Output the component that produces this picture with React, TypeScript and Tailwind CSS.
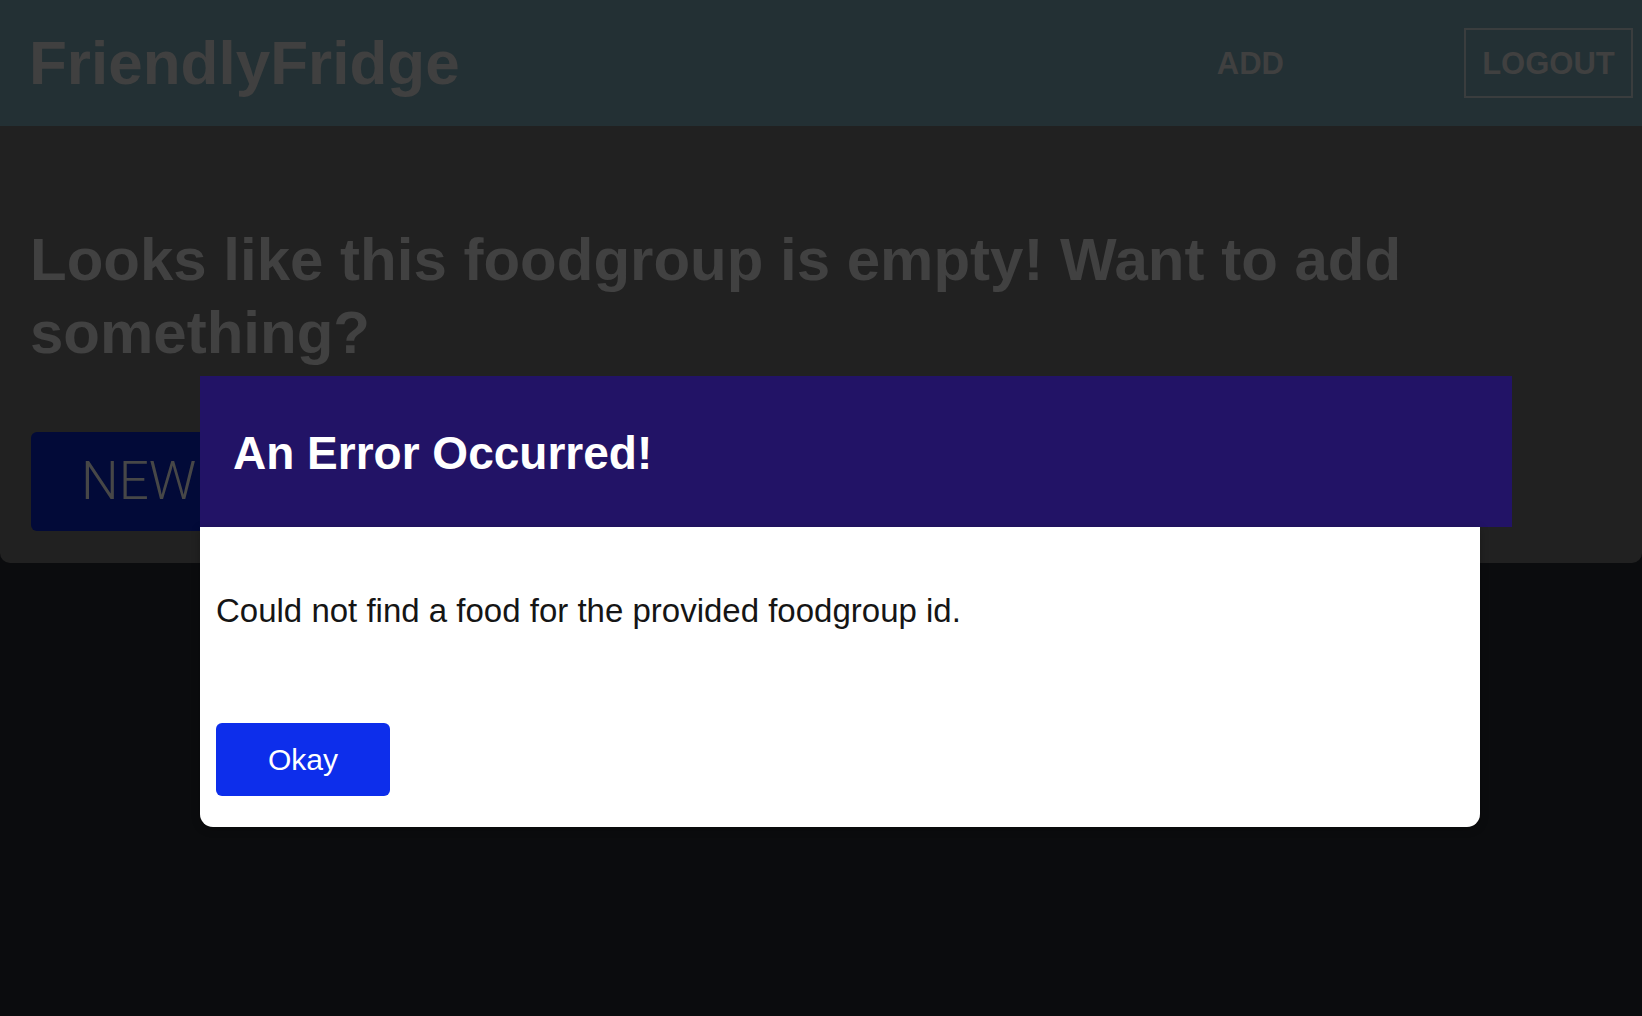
import React from "react";

export default function App() {
  return (
    <div
      className="relative min-h-screen w-full bg-[#0b0c0e] overflow-hidden"
      style={{ fontFamily: '"Liberation Sans", Arial, sans-serif' }}
    >
      <header className="h-[126px] bg-[#233034] flex items-center justify-between pl-[29px] pr-[9px]">
        <h1 className="text-[62px] font-bold text-[#404040] leading-none">FriendlyFridge</h1>
        <nav className="flex items-center gap-[180px]">
          <span className="text-[31px] font-bold text-[#404040] leading-none">ADD</span>
          <span className="h-[70px] w-[169px] border-2 border-[#3a3d3e] flex items-center justify-center text-[31px] font-bold text-[#404040] leading-none">
            LOGOUT
          </span>
        </nav>
      </header>

      <main className="bg-[#212121] rounded-b-[10px] pl-[30px] pr-[31px] pt-[97px] pb-[32px]">
        <h2 className="text-[60px] leading-[73px] font-bold text-[#414141]">
          Looks like this foodgroup is empty! Want to add something?
        </h2>
        <button
          className="mt-[63px] h-[99px] w-[250px] rounded-[6px] bg-[#020a38] text-left pl-[50px] text-[53px] font-light text-[#474747] ml-[1px]"
          style={{ fontFamily: 'Roboto, "Liberation Sans", sans-serif' }}
        >
          NEW
        </button>
      </main>

      <div className="absolute left-[200px] top-[376px] w-[1280px]">
        <div className="h-[151px] w-[1312px] bg-[#221366] flex items-center pl-[33px] pt-[3px]">
          <h3 className="text-[46px] font-bold text-white leading-none">An Error Occurred!</h3>
        </div>
        <div className="bg-white rounded-b-[13px] px-4 pt-[65px] pb-[31px] shadow-[0_2px_8px_rgba(0,0,0,0.26)]">
          <p className="text-[33px] leading-[37px] text-[#151515]">
            Could not find a food for the provided foodgroup id.
          </p>
          <button className="mt-[94px] h-[73px] w-[174px] rounded-[6px] bg-[#0d2eeb] text-white text-[30px] flex items-center justify-center">
            Okay
          </button>
        </div>
      </div>
    </div>
  );
}
